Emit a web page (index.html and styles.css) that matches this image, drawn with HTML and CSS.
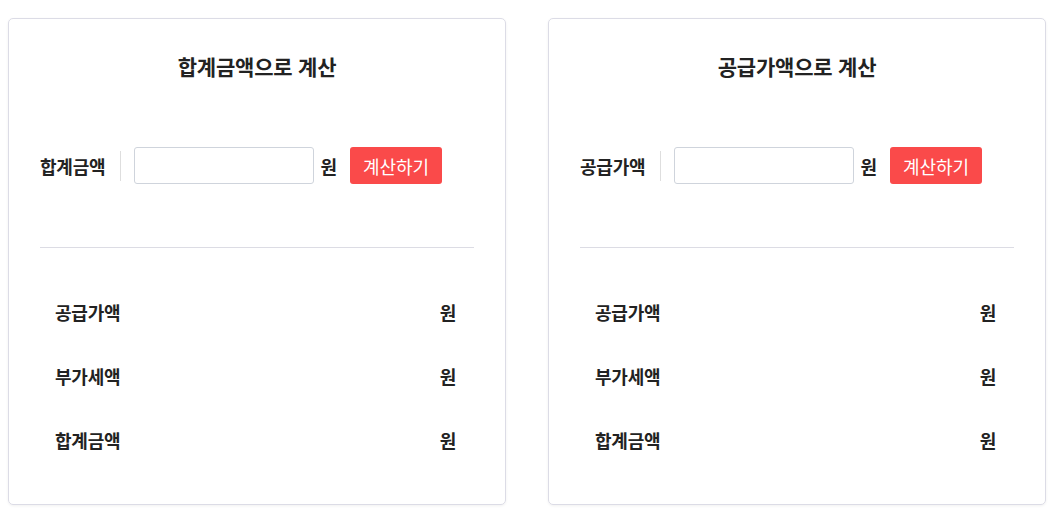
FILE: index.html
```html
<!DOCTYPE html>
<html lang="ko">
<head>
  <meta charset="UTF-8">
  <title>부가세 계산기</title>
  <link rel="stylesheet" href="styles.css">
</head>
<body>
  <div class="wrap">
    <!-- 합계금액 기준 -->
    <section class="card">
      <h2 class="card-title">합계금액으로 계산</h2>
      <div class="form-row">
        <span class="form-label">합계금액</span>
        <input type="text" class="amount-input" id="total-input">
        <span class="unit">원</span>
        <button class="calc-btn" onclick="calcFromTotal()">계산하기</button>
      </div>
      <hr class="divider">
      <ul class="result-list">
        <li><span>공급가액</span><span><span id="t-supply"></span>원</span></li>
        <li><span>부가세액</span><span><span id="t-vat"></span>원</span></li>
        <li><span>합계금액</span><span><span id="t-total"></span>원</span></li>
      </ul>
    </section>

    <!-- 공급가액 기준 -->
    <section class="card">
      <h2 class="card-title">공급가액으로 계산</h2>
      <div class="form-row">
        <span class="form-label">공급가액</span>
        <input type="text" class="amount-input" id="supply-input">
        <span class="unit">원</span>
        <button class="calc-btn" onclick="calcFromSupply()">계산하기</button>
      </div>
      <hr class="divider">
      <ul class="result-list">
        <li><span>공급가액</span><span><span id="s-supply"></span>원</span></li>
        <li><span>부가세액</span><span><span id="s-vat"></span>원</span></li>
        <li><span>합계금액</span><span><span id="s-total"></span>원</span></li>
      </ul>
    </section>
  </div>

  <script>
// 합계금액 -> 공급가액, 부가세
function calcFromTotal() {
  const total = Number(document.getElementById("total-input").value.replace(/,/g, ""));
  if (!total) return;
  const supply = Math.round(total / 1.1);
  document.getElementById("t-supply").textContent = supply.toLocaleString() + " ";
  document.getElementById("t-vat").textContent = (total - supply).toLocaleString() + " ";
  document.getElementById("t-total").textContent = total.toLocaleString() + " ";
}

// 공급가액 -> 부가세, 합계금액
function calcFromSupply() {
  const supply = Number(document.getElementById("supply-input").value.replace(/,/g, ""));
  if (!supply) return;
  const vat = Math.round(supply * 0.1);
  document.getElementById("s-supply").textContent = supply.toLocaleString() + " ";
  document.getElementById("s-vat").textContent = vat.toLocaleString() + " ";
  document.getElementById("s-total").textContent = (supply + vat).toLocaleString() + " ";
}
  </script>
</body>
</html>
```

FILE: styles.css
```css
body {
  margin: 0;
  padding: 18px 8px;
  font-family: "Noto Sans CJK KR", "Noto Sans", sans-serif;
  color: #222;
  background-color: #fff;
}

.wrap {
  display: flex;
  gap: 42px;
}

.card {
  width: 498px;
  box-sizing: border-box;
  padding: 32px 31px;
  border: 1px solid #dcdce6;
  border-radius: 5px;
  box-shadow: 0 1px 3px rgba(0,0,0,0.06);
}

.card-title {
  margin: 0;
  font-size: 21px;
  line-height: 30px;
  font-weight: 700;
  text-align: center;
  letter-spacing: -0.2px;
}

.form-row {
  display: flex;
  align-items: center;
  margin-top: 66px;
  height: 37px;
}

.form-label {
  font-size: 18px;
  font-weight: 700;
  padding-right: 15px;
  border-right: 1px solid #dedede;
  line-height: 30px;
  letter-spacing: -0.2px;
}

.amount-input {
  width: 180px;
  height: 37px;
  box-sizing: border-box;
  margin-left: 13px;
  border: 1px solid #cfd4dc;
  border-radius: 3px;
  padding: 0 8px;
  font-size: 15px;
}

.unit {
  font-size: 18px;
  font-weight: 700;
  margin-left: 6px;
}

.calc-btn {
  margin-left: 13px;
  width: 92px;
  height: 37px;
  border: none;
  border-radius: 3px;
  background-color: #fa4a4a;
  color: #fff;
  font-family: inherit;
  font-size: 18px;
  cursor: pointer;
}

.divider {
  margin: 63px 0 0;
  border: none;
  border-top: 1px solid #dcdce4;
}

.result-list {
  list-style-type: none;
  margin: 32px 0 0;
  padding: 0 18px 0 15px;
}

.result-list li {
  display: flex;
  justify-content: space-between;
  height: 64px;
  align-items: center;
  font-size: 18px;
  font-weight: 700;
  letter-spacing: -0.2px;
}
```
